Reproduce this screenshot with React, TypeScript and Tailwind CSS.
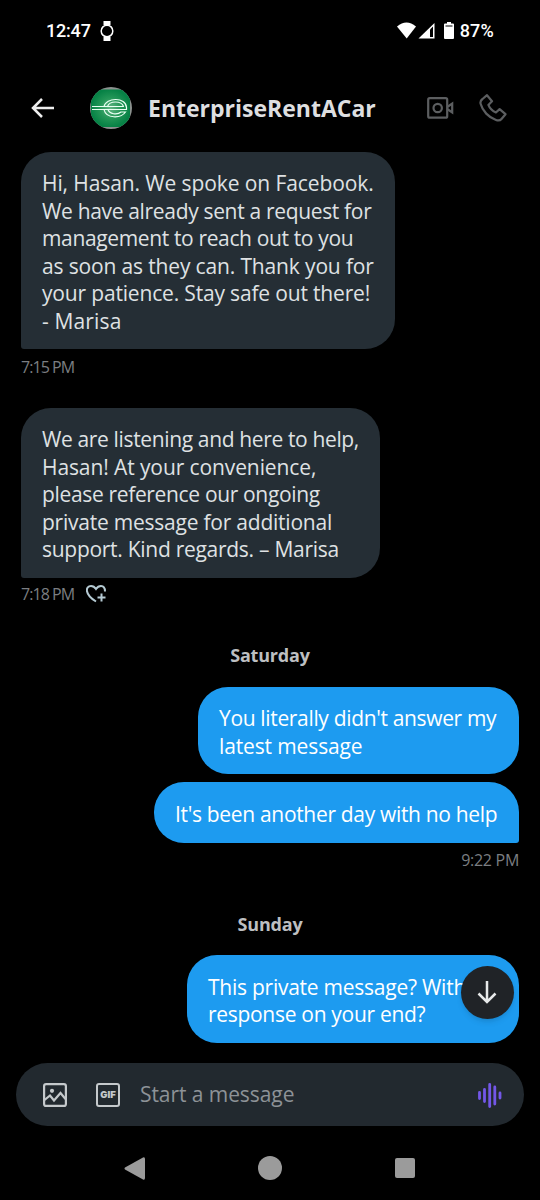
import type { ReactNode } from 'react';

interface Line {
  text: string;
  tracking: string;
}

interface BubbleProps {
  lines: Line[];
  className: string;
}

const FIRST_MESSAGE: Line[] = [
  { text: 'Hi, Hasan. We spoke on Facebook.', tracking: 'tracking-[-0.1px]' },
  { text: 'We have already sent a request for', tracking: 'tracking-[-0.33px]' },
  { text: 'management to reach out to you', tracking: 'tracking-[-0.36px]' },
  { text: 'as soon as they can. Thank you for', tracking: 'tracking-[-0.15px]' },
  { text: 'your patience. Stay safe out there!', tracking: 'tracking-[-0.17px]' },
  { text: '- Marisa', tracking: 'tracking-[0.15px]' },
];

const SECOND_MESSAGE: Line[] = [
  { text: 'We are listening and here to help,', tracking: 'tracking-[-0.36px]' },
  { text: 'Hasan! At your convenience,', tracking: 'tracking-[-0.1px]' },
  { text: 'please reference our ongoing', tracking: 'tracking-[-0.34px]' },
  { text: 'private message for additional', tracking: 'tracking-[-0.23px]' },
  { text: 'support. Kind regards. – Marisa', tracking: 'tracking-[-0.28px]' },
];

const ANSWER_MESSAGE: Line[] = [
  { text: "You literally didn't answer my", tracking: 'tracking-[-0.34px]' },
  { text: 'latest message', tracking: 'tracking-[-0.13px]' },
];

const HELP_MESSAGE: Line[] = [
  { text: "It's been another day with no help", tracking: 'tracking-[-0.32px]' },
];

const SUNDAY_MESSAGE: Line[] = [
  { text: 'This private message? With no', tracking: 'tracking-[-0.25px]' },
  { text: 'response on your end?', tracking: 'tracking-[-0.3px]' },
];

function Bubble({ lines, className }: BubbleProps) {
  return (
    <div className={`shrink-0 px-[21px] pt-[18.5px] text-[21px] leading-[27.5px] ${className}`}>
      {lines.map((line) => (
        <div key={line.text} className={`whitespace-nowrap ${line.tracking}`}>
          {line.text}
        </div>
      ))}
    </div>
  );
}

function DayLabel({ children }: { children: ReactNode }) {
  return (
    <div className="text-center text-[18px] leading-6 font-bold tracking-[-0.2px] text-[#bdbfc1]">{children}</div>
  );
}

function StatusBar() {
  return (
    <div className="flex h-[62px] items-center pr-[46px] pl-[46px] font-['Roboto',sans-serif] text-white">
      <span className="text-[18px] font-medium tracking-[-0.2px]">12:47</span>
      <svg className="ml-[9px] h-5 w-[14px]" viewBox="0 0 14 20">
        <path d="M3.500 0h7v4h-7zM3.500 16h7v4h-7z" fill="currentColor" />
        <circle cx="7" cy="10" r="5.800" fill="#000" stroke="currentColor" strokeWidth="1.500" />
      </svg>
      <svg className="ml-auto h-[17px] w-[58px]" viewBox="0 0 58 17">
        <path d="M0 4.500Q9.500-3.500 19 4.500L9.700 16.500z" fill="currentColor" />
        <path d="M37.500 1v15.500H21.500z" fill="currentColor" />
        <path d="M33 7.500l3-3v10.500H33z" fill="#000" />
        <path d="M50 0h4v1.500h2q1 0 1 1V16q0 1-1 1h-8q-1 0-1-1V2.500q0-1 1-1h2z" fill="currentColor" />
        <path d="M48.500 4h7" stroke="#000" strokeWidth="1" />
      </svg>
      <span className="ml-[5px] text-[18px] font-medium tracking-[0.2px]">87%</span>
    </div>
  );
}

function Avatar() {
  return (
    <svg className="h-[42px] w-[42px]" viewBox="0 0 42 42">
      <defs>
        <radialGradient id="avatarGreen">
          <stop offset="0" stopColor="#62b584" />
          <stop offset="0.55" stopColor="#239657" />
          <stop offset="1" stopColor="#078246" />
        </radialGradient>
        <clipPath id="avatarClip">
          <circle cx="21" cy="21" r="21" />
        </clipPath>
      </defs>
      <g clipPath="url(#avatarClip)">
        <rect width="42" height="42" fill="#8b918e" />
        <rect x="1" y="2.500" width="39" height="37.500" rx="10" fill="url(#avatarGreen)" />
        <g fill="none" stroke="#e9fff2" strokeWidth="1.200">
          <path d="M2 19.500h32M2 22.500h34.500v-2C36 10 16 10 14 19.500M14 22.500c2 9.500 17 9 21.500 2.500h-4.500c-4 3.500-11.500 2-13-2.500M17.500 19.500c2-6 14-6 16 0" />
        </g>
      </g>
    </svg>
  );
}

function Header() {
  return (
    <header className="flex h-[90px] items-center pt-[2px] pl-[31px] text-[#5c5e60]">
      <svg className="h-5 w-[24px] text-[#eeeeee]" viewBox="0 0 24 20" fill="none" stroke="currentColor" strokeWidth="2.500">
        <path d="M23 10H2M11 1L2 10l9 9" />
      </svg>
      <div className="ml-[35px]">
        <Avatar />
      </div>
      <h1 className="ml-4 w-[228px] text-[23px] font-bold whitespace-nowrap text-[#dedfe0]">EnterpriseRentACar</h1>
      <svg className="ml-[51px] h-[22px] w-[27px]" viewBox="0 0 27 22" fill="none" stroke="currentColor" strokeWidth="2.200">
        <rect x="1.200" y="1.200" width="19" height="19.500" rx="1.500" />
        <circle cx="10.700" cy="11" r="4.200" />
        <path d="M20.200 10l5-3.500v9l-5-3.500" />
      </svg>
      <svg className="ml-[25px] h-[28px] w-[28px]" viewBox="0 0 28 28" fill="none" stroke="currentColor" strokeWidth="2.200" strokeLinejoin="round">
        <path d="M3.500 5L8 1.200l5 6-3.600 3.700c1.300 3.400 4 6 7.500 7.600l3.700-3.400 5.900 5.100-4 4.800c-1.300 1.500-3.500 1.700-5.500 1C9.600 23.400 3.500 17 1.600 9.800 1.100 7.800 1.600 6.400 3.500 5z" />
      </svg>
    </header>
  );
}

function Composer() {
  return (
    <div className="mx-4 flex h-[63px] shrink-0 items-center rounded-full bg-[#22292f] pt-px pl-[27px] text-[#c5c9cc]">
      <svg className="h-6 w-6" viewBox="0 0 24 24" fill="none" stroke="currentColor" strokeWidth="2.200">
        <rect x="1.100" y="1.100" width="21.800" height="21.800" rx="2" />
        <path d="M1.500 17l5.500-4.500 4 5L17.500 10l5 6" />
        <circle cx="9" cy="7.800" r="2.100" fill="currentColor" stroke="none" />
      </svg>
      <div className="ml-[29px] flex h-6 w-6 items-center justify-center rounded-[3px] border-2 border-current font-['Inter','Open_Sans',sans-serif] text-[9.5px] font-black">
        GIF
      </div>
      <span className="ml-5 text-[21px] tracking-[-0.07px] text-[#8d9297]">Start a message</span>
      <svg className="mr-[22px] ml-auto h-[25px] w-6" viewBox="0 0 24 25" stroke="#7357e8" strokeWidth="2.800" strokeLinecap="round">
        <path d="M1.500 9.500v6M6.500 6.500v12M11.700 1.500v22M16.800 4v17M22 10v5" />
      </svg>
    </div>
  );
}

function SystemNav() {
  return (
    <nav className="flex h-[74px] items-center pt-[10px] text-[#9b9b9b]">
      <svg className="ml-[124px] h-[23px] w-[21px]" viewBox="0 0 21 23" fill="currentColor">
        <path d="M19 .5q2-.8 2 1.500v19q0 2.300-2 1.500L1 12.500q-1-1 0-2z" />
      </svg>
      <div className="ml-[113px] h-6 w-6 rounded-full bg-current" />
      <div className="ml-[113px] h-5 w-5 rounded-[2px] bg-current" />
    </nav>
  );
}

export default function App() {
  return (
    <div className="flex h-[1200px] w-[540px] flex-col overflow-hidden bg-black font-['Open_Sans','Liberation_Sans',sans-serif]">
      <StatusBar />
      <Header />
      <main className="flex h-[911.5px] shrink-0 flex-col px-[21px] text-[#7b7e82]">
        <Bubble
          lines={FIRST_MESSAGE}
          className="h-[197px] w-[374px] rounded-[30px] rounded-bl-[3px] bg-[#252e35] text-[#dfe1e3]"
        />
        <div className="mt-2 text-[16px] leading-5 tracking-[-0.95px]">7:15 PM</div>
        <Bubble
          lines={SECOND_MESSAGE}
          className="mt-[31px] h-[170px] w-[359px] rounded-[30px] rounded-bl-[3px] bg-[#252e35] text-[#dfe1e3]"
        />
        <div className="mt-1.5 flex h-5 items-center text-[16px] leading-5 tracking-[-0.95px]">
          <span className="w-[54px] whitespace-nowrap">7:18 PM</span>
          <svg className="ml-[11px] h-[18px] w-5 text-[#b5cad3]" viewBox="0 0 20 18" fill="none" stroke="currentColor" strokeWidth="2">
            <path d="M10 16.500C-2 9-.5 1 5 1c2.500 0 4 1.500 5 3 1-1.500 2.500-3 5-3 2.500 0 4 2 4 5.500M15.500 8.500v8M11.500 12.500h8" />
          </svg>
        </div>
        <div className="mt-[39px]">
          <DayLabel>Saturday</DayLabel>
        </div>
        <Bubble
          lines={ANSWER_MESSAGE}
          className="mt-5 h-[87.5px] w-[321px] self-end rounded-[30px] bg-[#1d9bf0] text-white"
        />
        <Bubble
          lines={HELP_MESSAGE}
          className="mt-2 h-[60.5px] w-[365px] self-end rounded-[30px] rounded-br-[3px] bg-[#1d9bf0] text-white"
        />
        <div className="mt-[7px] text-right text-[16px] leading-5 tracking-[-0.3px]">9:22 PM</div>
        <div className="mt-[42px]">
          <DayLabel>Sunday</DayLabel>
        </div>
        {/* jump-to-latest button floats over the newest message */}
        <div className="relative mt-[19.5px] self-end">
          <Bubble
            lines={SUNDAY_MESSAGE}
            className="h-[87.5px] w-[332px] rounded-[30px] bg-[#1d9bf0] text-white"
          />
          <button className="absolute top-[11px] right-[5.5px] flex h-[53px] w-[53px] items-center justify-center rounded-full bg-[#202327] text-[#e7e9ea] shadow-md">
            <svg className="h-[23px] w-5" viewBox="0 0 20 23" fill="none" stroke="currentColor" strokeWidth="2.500">
              <path d="M10 0v21M1.500 12.500L10 21l8.500-8.500" />
            </svg>
          </button>
        </div>
      </main>
      <Composer />
      <SystemNav />
    </div>
  );
}
